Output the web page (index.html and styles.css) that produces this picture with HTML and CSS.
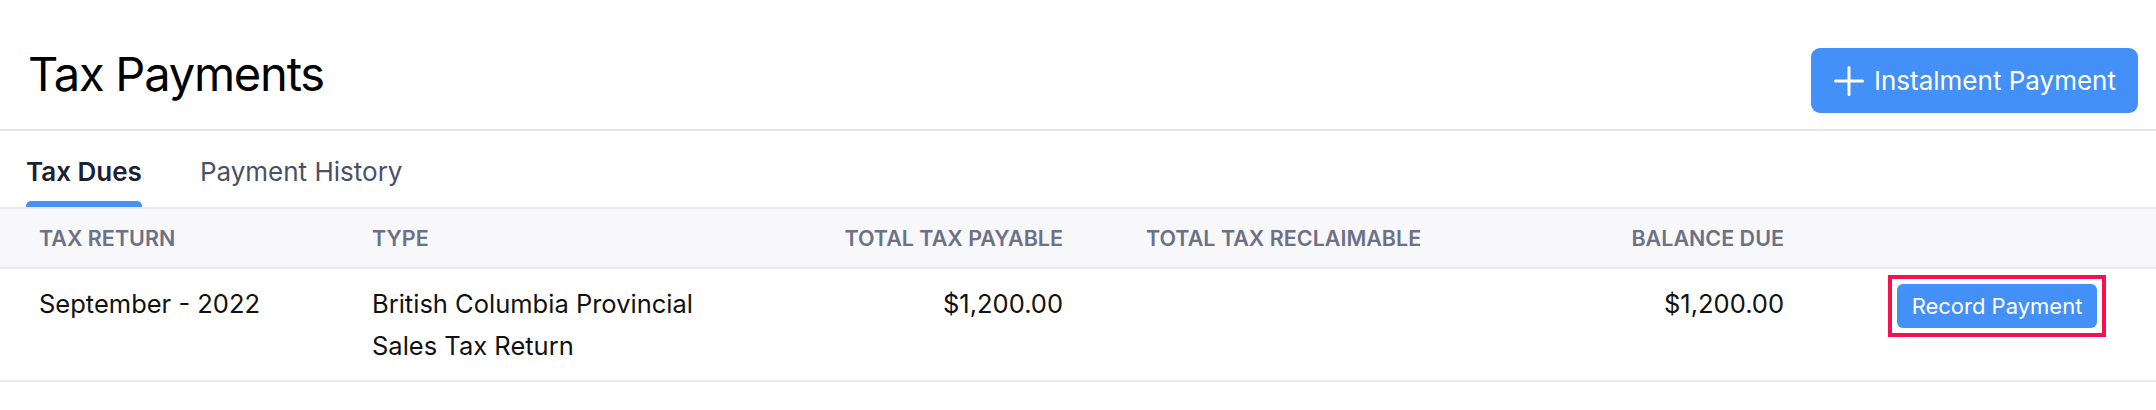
FILE: index.html
```html
<!DOCTYPE html>
<html lang="en">
<head>
<meta charset="utf-8">
<title>Tax Payments</title>
<link rel="stylesheet" href="styles.css">
</head>
<body>
<div class="page">
  <header class="page-header">
    <h1 class="title">Tax Payments</h1>
    <button class="btn-primary" type="button">
      <svg class="plus" viewBox="0 0 32 32" width="32" height="32" aria-hidden="true">
        <path d="M16 2.5V29.5M2.5 16H29.5" stroke="#fff" stroke-width="3" stroke-linecap="round" fill="none"/>
      </svg>
      <span>Instalment Payment</span>
    </button>
  </header>

  <nav class="tabs">
    <a class="tab active">Tax Dues</a>
    <a class="tab">Payment History</a>
  </nav>

  <div class="table">
    <div class="row head">
      <div class="cell c1">TAX RETURN</div>
      <div class="cell c2">TYPE</div>
      <div class="cell c3 num">TOTAL TAX PAYABLE</div>
      <div class="cell c4">TOTAL TAX RECLAIMABLE</div>
      <div class="cell c5 num">BALANCE DUE</div>
      <div class="cell c6"></div>
    </div>
    <div class="row body">
      <div class="cell c1">September - 2022</div>
      <div class="cell c2">British Columbia Provincial<br>Sales Tax Return</div>
      <div class="cell c3 num">$1,200.00</div>
      <div class="cell c4"></div>
      <div class="cell c5 num">$1,200.00</div>
      <div class="cell c6"><span class="highlight"><button class="btn-record" type="button">Record Payment</button></span></div>
    </div>
  </div>
</div>
</body>
</html>
```

FILE: styles.css
```css
* { box-sizing: border-box; }
html, body { margin: 0; padding: 0; background: #fff; }
body {
  font-family: Inter, "Noto Sans", "Liberation Sans", sans-serif;
  color: #111;
}
.page { width: 2156px; }

.page-header {
  height: 131px;
  display: flex;
  align-items: center;
  justify-content: space-between;
  padding: 0 18px 0 28px;
  border-bottom: 2px solid #e6e6e8;
}
.title {
  margin: 17px 0 0 0;
  font-size: 47px;
  font-weight: 400;
  color: #000;
  letter-spacing: -1.2px;
  line-height: 1;
}
.btn-primary {
  height: 65px;
  width: 327px;
  margin-top: 32px;
  display: flex;
  align-items: center;
  gap: 9px;
  padding: 0 22px;
  border: 0;
  border-radius: 9px;
  background: #4390f8;
  color: #fff;
  font-family: inherit;
  font-size: 26px;
  font-weight: 400;
  cursor: pointer;
}
.plus { flex: none; }

.tabs {
  height: 76px;
  display: flex;
  align-items: flex-end;
  gap: 58px;
  padding-left: 26px;
}
.tab {
  display: block;
  font-size: 26px;
  line-height: 1;
  color: #4a5068;
  padding-bottom: 22px;
  position: relative;
}
.tab.active {
  color: #1c2033;
  font-weight: 600;
}
.tab.active::after {
  content: "";
  position: absolute;
  left: 0;
  right: 0;
  bottom: 0;
  height: 6px;
  background: #4690f6;
  border-radius: 5px 5px 0 0;
}

.table { width: 100%; }
.row {
  display: grid;
  grid-template-columns: 372px 388px 303px 400px 321px 1fr;
}
.row.head {
  height: 62px;
  align-items: center;
  background: #f8f8fa;
  border-top: 2px solid #e9e9ee;
  border-bottom: 2px solid #e9e9ee;
  font-size: 21.5px;
  font-weight: 600;
  color: #6c7186;
}
.row.body {
  height: 113px;
  align-items: start;
  padding-top: 14px;
  border-bottom: 2px solid #e9e9ee;
  font-size: 25.5px;
  line-height: 42px;
  color: #111;
}
.c1 { padding-left: 39px; }
.num { text-align: right; }
.c4 { padding-left: 83px; }
.c6 { padding-left: 104px; }

.highlight {
  display: inline-block;
  margin-top: -8px;
  padding: 5px;
  border: 4px solid #f7104f;
  line-height: 0;
}
.btn-record {
  display: block;
  width: 200px;
  height: 44px;
  border: 0;
  border-radius: 6px;
  background: #4390f8;
  color: #fff;
  font-family: inherit;
  font-size: 22px;
  line-height: 44px;
  font-weight: 400;
  padding: 0;
  cursor: pointer;
}
```
